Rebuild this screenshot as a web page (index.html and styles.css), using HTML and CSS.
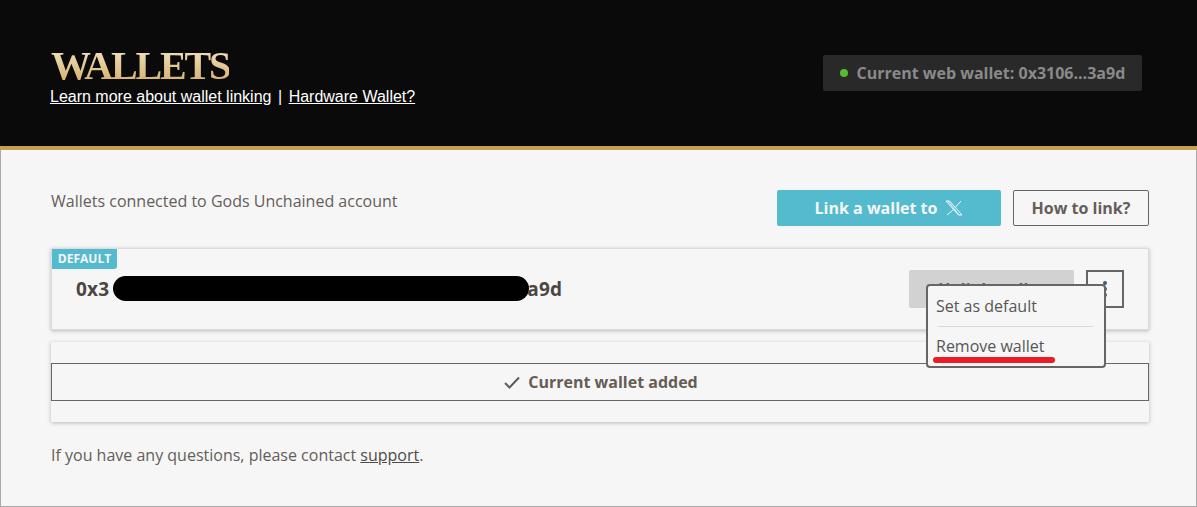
FILE: index.html
```html
<!DOCTYPE html>
<html lang="en">
<head>
  <meta charset="UTF-8" />
  <meta name="viewport" content="width=device-width, initial-scale=1" />
  <title>Wallets</title>
  <link rel="stylesheet" href="styles.css">
</head>
<body>

  <header class="top">
    <div class="top-left">
      <h1 class="title">WALLETS</h1>
      <div class="top-links">
        <a href="#">Learn more about wallet linking</a>
        <span class="sep">|</span>
        <a href="#">Hardware Wallet?</a>
      </div>
    </div>
    <div class="web-wallet">
      <span class="dot"></span>
      <span>Current web wallet: 0x3106...3a9d</span>
    </div>
  </header>

  <main class="content">
    <div class="toolbar">
      <p class="intro">Wallets connected to Gods Unchained account</p>
      <div class="toolbar-btns">
        <button class="btn-link">
          Link a wallet to
          <svg class="x-logo" width="18" height="16" viewBox="0 0 18 16" fill="none" stroke="#fff" stroke-width="0.900">
            <path d="M1 1h3.600L17 15h-3.600z" />
            <path d="M3 1L14 15M16 1L10 7.800M8 10L2 15" />
          </svg>
        </button>
        <button class="btn-how">How to link?</button>
      </div>
    </div>

    <section class="card wallet-card">
      <span class="tag">DEFAULT</span>
      <div class="address">0x3<span class="redact"></span>a9d</div>
      <div class="wallet-actions">
        <button class="btn-unlink">Unlink wallet</button>
        <button class="btn-more">
          <svg width="4" height="18" viewBox="0 0 4 18" fill="#3d5a80">
            <circle cx="2" cy="3" r="2" />
            <circle cx="2" cy="9" r="2" />
            <circle cx="2" cy="15" r="2" />
          </svg>
        </button>
      </div>

      <div class="menu">
        <div class="menu-item">Set as default</div>
        <div class="menu-line"></div>
        <div class="menu-item">Remove wallet</div>
        <div class="red-mark"></div>
      </div>
    </section>

    <section class="card add-card">
      <div class="added">
        <svg width="16" height="13" viewBox="0 0 16 13" fill="none" stroke="#665c54" stroke-width="2">
          <path d="M1 7l4.500 4.500L15 1.500" />
        </svg>
        Current wallet added
      </div>
    </section>

    <p class="help">If you have any questions, please contact <a href="#">support</a>.</p>
  </main>

</body>
</html>
```

FILE: styles.css
```css
* {
  box-sizing: border-box;
}
html, body {
  height: 100%;
}
body {
  margin: 0;
  background: #f6f6f6;
  font-family: "Open Sans", "Noto Sans", sans-serif;
  color: #655d58;
  display: flex;
  flex-direction: column;
  overflow: hidden;
}
button {
  font-family: inherit;
  cursor: pointer;
}
.top {
  height: 150px;
  flex: none;
  background: #0a0a0a;
  border-bottom: 4px solid #c6a052;
  padding: 47px 55px 0 50px;
  display: flex;
  justify-content: space-between;
  align-items: flex-start;
}
.title {
  margin: 0 0 0 1px;
  font-family: "Liberation Serif", serif;
  font-size: 40px;
  line-height: 37px;
  font-weight: 700;
  letter-spacing: -2.200px;
  background: linear-gradient(#f3e3c2, #d4ae68);
  -webkit-background-clip: text;
  background-clip: text;
  color: transparent;
  width: max-content;
}
.top-links {
  margin-top: 4px;
  font-family: "Liberation Sans", Arial, sans-serif;
  font-size: 16px;
  line-height: 18px;
  color: #fff;
  display: flex;
  gap: 6.500px;
}
.top-links a {
  color: #fff;
}
.web-wallet {
  margin-top: 8px;
  width: 319px;
  height: 36px;
  background: #292929;
  border-radius: 2px;
  padding-left: 17px;
  display: flex;
  align-items: center;
  gap: 8.500px;
  color: #8a8a8a;
  font-size: 16px;
  font-weight: 700;
}
.dot {
  width: 8px;
  height: 8px;
  border-radius: 50%;
  background: #55bd2f;
}
.content {
  flex: 1;
  padding: 40px 47px 0 50px;
  border-left: 1px solid #aaa;
  border-right: 1px solid #aaa;
  border-bottom: 1px solid #aaa;
}
.toolbar {
  display: flex;
  justify-content: space-between;
  align-items: flex-start;
  margin-bottom: 22px;
}
.intro {
  margin: 0;
  font-size: 16px;
  line-height: 22px;
}
.toolbar-btns {
  display: flex;
  gap: 12px;
}
.btn-link {
  width: 224px;
  height: 36px;
  background: #54bacd;
  border: none;
  border-radius: 2px;
  color: #f6f6f6;
  font-size: 16px;
  font-weight: 700;
  display: flex;
  align-items: center;
  justify-content: center;
  gap: 8px;
}
.btn-how {
  width: 136px;
  height: 36px;
  background: transparent;
  border: 1px solid #666;
  border-radius: 2px;
  color: #655d58;
  font-size: 16px;
  font-weight: 700;
}
.card {
  background: #f6f6f6;
  box-shadow: 0 1px 4px rgba(0, 0, 0, 0.25);
}
.wallet-card {
  position: relative;
  height: 82px;
  margin-bottom: 12px;
  border: 1px solid #dcdcdc;
  display: flex;
  justify-content: space-between;
  padding: 21px 24px 0 24px;
}
.tag {
  position: absolute;
  top: 0;
  left: 0;
  height: 20px;
  width: 65px;
  background: #54bacd;
  border-radius: 0 0 3px 0;
  color: #f6f6f6;
  font-size: 12px;
  line-height: 20px;
  font-weight: 700;
  text-align: center;
}
.address {
  font-size: 19px;
  line-height: 38px;
  font-weight: 700;
  color: #4b4643;
  letter-spacing: 0.2px;
  white-space: nowrap;
}
.redact {
  display: inline-block;
  width: 416px;
  height: 25px;
  margin: 0 -2px 0 4px;
  vertical-align: -5px;
  background: #000;
  border-radius: 13px;
}
.wallet-actions {
  display: flex;
  gap: 12px;
}
.btn-unlink {
  width: 165px;
  height: 38px;
  background: #d2d2d2;
  border: none;
  border-radius: 2px;
  color: #655d58;
  font-size: 16px;
  font-weight: 700;
}
.btn-more {
  width: 38px;
  height: 38px;
  background: transparent;
  border: 2px solid #666;
  padding: 0;
  display: flex;
  align-items: center;
  justify-content: center;
}
.menu {
  position: absolute;
  top: 35px;
  left: 874px;
  width: 180px;
  height: 84px;
  background: #f6f6f6;
  border: 2px solid #666;
  border-radius: 4px;
  padding: 0 8px;
  font-size: 16px;
  color: #565656;
}
.menu-item {
  line-height: 22px;
  padding-top: 9px;
}
.menu-line {
  height: 1px;
  background: #d8d8d8;
  margin: 9px 0 0 2px;
  width: 155px;
}
.menu-line + .menu-item {
  padding-top: 8px;
}
.red-mark {
  position: absolute;
  left: 5px;
  top: 71px;
  width: 122px;
  height: 6px;
  background: #ed1c24;
  border-radius: 3px;
}
.add-card {
  height: 80px;
  padding-top: 21px;
}
.added {
  height: 38px;
  border: 1px solid #666;
  display: flex;
  align-items: center;
  justify-content: center;
  gap: 8px;
  font-size: 16px;
  font-weight: 700;
  color: #665c54;
  padding-left: 2px;
}
.help {
  margin: 22px 0 0;
  font-size: 16px;
  line-height: 22px;
}
.help a {
  color: #4f4a47;
}
```
